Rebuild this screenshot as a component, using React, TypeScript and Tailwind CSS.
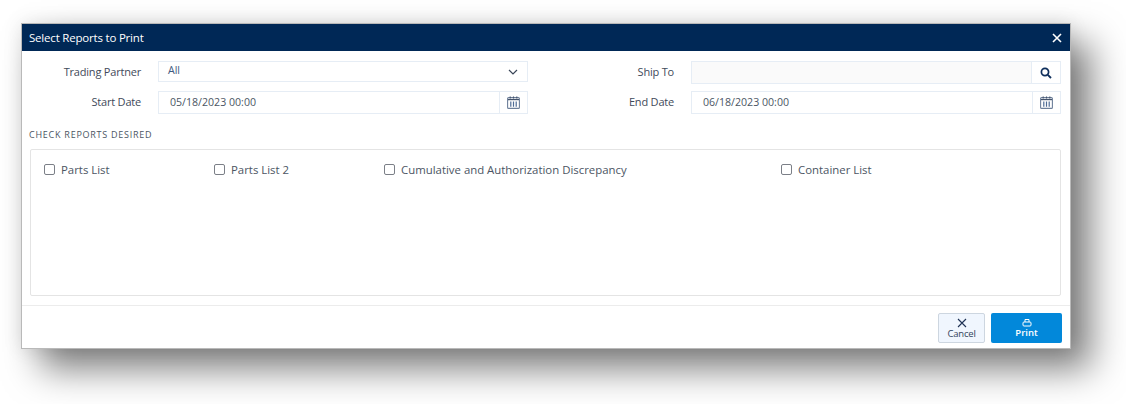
import React from "react";

const font = { fontFamily: '"Open Sans", "Noto Sans", sans-serif' };

function CalendarIcon() {
  return (
    <svg width="13" height="13" viewBox="0 0 13 13" fill="none">
      <rect x="0.6" y="1.6" width="11.8" height="10.8" rx="1" stroke="#6d7f9a" strokeWidth="1.1" />
      <path d="M1 3.6h11" stroke="#44536c" strokeWidth="1.2" />
      <path d="M3.2 0.4v2M6.5 0.4v2M9.8 0.4v2" stroke="#44536c" strokeWidth="1.1" />
      <path d="M3.8 5.5v5.2M6.5 5.5v5.2M9.2 5.5v5.2" stroke="#4d6a94" strokeWidth="1.2" />
    </svg>
  );
}

function Label({ children }: { children: React.ReactNode }) {
  return (
    <div className="mt-[3px] w-[111px] shrink-0 text-right text-[11px] font-medium tracking-[-0.2px] text-[#3f4a5a]">{children}</div>
  );
}

function DateField({ value }: { value: string }) {
  return (
    <div className="ml-[17px] flex h-[23px] flex-1 border border-[#e6edf5] bg-white">
      <div className="flex flex-1 items-center pl-[11px] text-[10.6px] text-[#4b5563]">{value}</div>
      <div className="flex w-[28px] items-center justify-center border-l border-[#e6edf5]">
        <CalendarIcon />
      </div>
    </div>
  );
}

function Check({ label, className }: { label: string; className: string }) {
  return (
    <label className={`flex items-center ${className}`}>
      <span className="h-[11px] w-[11px] rounded-[2px] border border-[#7b7f87] bg-white" />
      <span className="ml-[6px] text-[11.4px] text-[#4b5563]">{label}</span>
    </label>
  );
}

export default function App() {
  return (
    <div className="h-[404px] w-[1126px] overflow-hidden bg-white pl-[21px] pt-[23px]" style={font}>
      <div className="flex h-[326px] w-[1050px] flex-col border border-[#b9b9b9] bg-white shadow-[20px_20px_34px_rgba(0,0,0,0.5),0_0_18px_rgba(0,0,0,0.1)]">
        <div className="flex h-[27px] shrink-0 items-center justify-between bg-[#002856] pl-[7px] pr-[8px] text-white">
          <span className="text-[11.5px] font-medium tracking-[-0.2px]">Select Reports to Print</span>
          <svg width="10" height="10" viewBox="0 0 10 10" fill="none">
            <path d="M1 1l8 8M9 1l-8 8" stroke="white" strokeWidth="1.6" />
          </svg>
        </div>
        <div className="flex flex-1 flex-col pl-[8px] pr-[9px]">
          <div className="mt-[10px] flex h-[21px] items-start">
            <div className="flex w-[498px] items-start">
              <Label>Trading Partner</Label>
              <div className="ml-[17px] flex h-[21px] flex-1 items-center justify-between border border-[#e6edf5] pl-[9px] pr-[9px] text-[10.6px] text-[#3f5a80]">
                <span className="-mt-[1px]">All</span>
                <svg width="10" height="6" viewBox="0 0 10 6" fill="none">
                  <path d="M1 1l4 4 4-4" stroke="#3a4658" strokeWidth="1.2" />
                </svg>
              </div>
            </div>
            <div className="ml-[35px] flex flex-1 items-start">
              <Label>Ship To</Label>
              <div className="ml-[17px] flex h-[23px] flex-1 border border-[#e6edf5] bg-[#fafafa]">
                <div className="flex-1" />
                <div className="flex w-[29px] items-center justify-center border-l border-[#e6edf5] bg-white">
                  <svg width="12" height="12" viewBox="0 0 12 12" fill="none">
                    <circle cx="5" cy="5" r="3.6" stroke="#0f2f5c" strokeWidth="1.7" />
                    <path d="M7.8 7.8L11 11" stroke="#0f2f5c" strokeWidth="1.9" />
                  </svg>
                </div>
              </div>
            </div>
          </div>
          <div className="mt-[9px] flex h-[23px] items-start">
            <div className="flex w-[498px] items-start">
              <Label>Start Date</Label>
              <DateField value="05/18/2023 00:00" />
            </div>
            <div className="ml-[35px] flex flex-1 items-start">
              <Label>End Date</Label>
              <DateField value="06/18/2023 00:00" />
            </div>
          </div>
          <div className="mt-[14px] -ml-[1px] text-[9px] font-medium tracking-[0.75px] text-[#4b5563]">CHECK REPORTS DESIRED</div>
          <div className="mt-[7px] flex h-[147px] items-start rounded-[2px] border border-[#e4e4e4] pl-[13px] pt-[11px]">
            <Check label="Parts List" className="w-[170px]" />
            <Check label="Parts List 2" className="w-[170px]" />
            <Check label="Cumulative and Authorization Discrepancy" className="w-[397px]" />
            <Check label="Container List" className="w-[170px]" />
          </div>
        </div>
        <div className="flex h-[43px] shrink-0 items-center justify-end border-t border-[#ececec] pr-[8px] pt-[2px]">
          <button className="flex h-[30px] w-[47px] flex-col items-center justify-center rounded-[2px] border border-[#cdd6e0] bg-[#f0f6fe] text-[9.5px] font-medium leading-[11px] tracking-[-0.2px] text-[#33445c]">
            <svg width="10" height="10" viewBox="0 0 10 10" fill="none">
              <path d="M1 1l8 8M9 1l-8 8" stroke="#1f3355" strokeWidth="1.1" />
            </svg>
            Cancel
          </button>
          <button className="ml-[6px] flex h-[30px] w-[71px] flex-col items-center justify-center rounded-[2px] bg-[#0288da] text-[9.5px] font-semibold leading-[11px] text-white">
            <svg width="10" height="9" viewBox="0 0 10 9" fill="none">
              <path d="M3 4V1.5h4V4" stroke="white" strokeWidth="1" />
              <rect x="1" y="4" width="8" height="4" rx="1" stroke="white" strokeWidth="1" />
            </svg>
            Print
          </button>
        </div>
      </div>
    </div>
  );
}
